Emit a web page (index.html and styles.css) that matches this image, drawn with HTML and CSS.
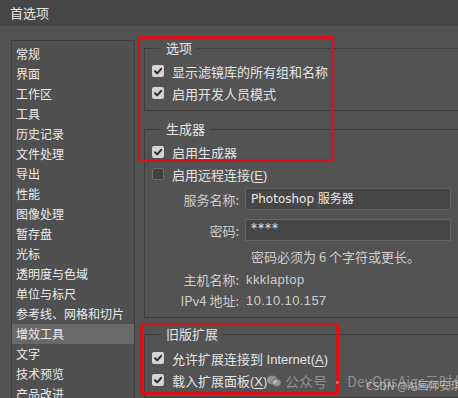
FILE: index.html
```html
<!DOCTYPE html>
<html lang="zh-CN">
<head>
  <meta charset="UTF-8">
  <title>首选项</title>
  <link rel="stylesheet" href="styles.css">
</head>
<body>
  <div class="dialog">
    <div class="titlebar">首选项</div>

    <div class="main">
      <!-- 左侧分类列表 -->
      <ul class="nav">
        <li>常规</li>
        <li>界面</li>
        <li>工作区</li>
        <li>工具</li>
        <li>历史记录</li>
        <li>文件处理</li>
        <li>导出</li>
        <li>性能</li>
        <li>图像处理</li>
        <li>暂存盘</li>
        <li>光标</li>
        <li>透明度与色域</li>
        <li>单位与标尺</li>
        <li>参考线、网格和切片</li>
        <li class="active">增效工具</li>
        <li>文字</li>
        <li>技术预览</li>
        <li>产品改进</li>
      </ul>

      <div class="panel">
        <!-- 选项 -->
        <fieldset class="group g-options">
          <legend>选项</legend>
          <label class="check"><span class="box on"><svg viewBox="0 0 12 12"><path d="M3 6.2 L5.2 8.4 L9.2 3.8"/></svg></span><span>显示滤镜库的所有组和名称</span></label>
          <label class="check"><span class="box on"><svg viewBox="0 0 12 12"><path d="M3 6.2 L5.2 8.4 L9.2 3.8"/></svg></span><span>启用开发人员模式</span></label>
        </fieldset>

        <!-- 生成器 -->
        <fieldset class="group g-generator">
          <legend>生成器</legend>
          <label class="check"><span class="box on"><svg viewBox="0 0 12 12"><path d="M3 6.2 L5.2 8.4 L9.2 3.8"/></svg></span><span>启用生成器</span></label>
          <label class="check"><span class="box"></span><span>启用远程连接(<u>E</u>)</span></label>

          <div class="field f-service">
            <span class="label">服务名称:</span>
            <span class="input">Photoshop 服务器</span>
          </div>
          <div class="field f-pass">
            <span class="label">密码:</span>
            <span class="input pass">****</span>
          </div>
          <div class="hint">密码必须为 6 个字符或更长。</div>
          <div class="field info f-host">
            <span class="label">主机名称:</span>
            <span class="value">kkklaptop</span>
          </div>
          <div class="field info">
            <span class="label">IPv4 地址:</span>
            <span class="value">10.10.10.157</span>
          </div>
        </fieldset>

        <!-- 旧版扩展 -->
        <fieldset class="group g-legacy">
          <legend>旧版扩展</legend>
          <label class="check"><span class="box on"><svg viewBox="0 0 12 12"><path d="M3 6.2 L5.2 8.4 L9.2 3.8"/></svg></span><span>允许扩展连接到 Internet(<u>A</u>)</span></label>
          <label class="check"><span class="box on"><svg viewBox="0 0 12 12"><path d="M3 6.2 L5.2 8.4 L9.2 3.8"/></svg></span><span>载入扩展面板(<u>X</u>)</span></label>
        </fieldset>
      </div>
    </div>

    <!-- 标注框 -->
    <div class="mark mark-1"></div>
    <div class="mark mark-2"></div>

    <!-- 水印 -->
    <div class="watermark">
      <svg class="wx" viewBox="0 0 16 14">
        <ellipse cx="6" cy="6" rx="5.6" ry="4.8"/>
        <ellipse cx="10.6" cy="8.8" rx="4.6" ry="3.9"/>
      </svg>
      <span>公众号 · DevOpsAigc云时代</span>
    </div>
    <div class="csdn">CSDN @AI画师安琪</div>
  </div>
</body>
</html>
```

FILE: styles.css
```css
body { margin: 0; background: #535353; }
.dialog { position: relative; width: 458px; height: 398px; overflow: hidden; background: #535353; color: #e2e2e2; font-family: "Liberation Sans", "Noto Sans CJK SC", sans-serif; }

.titlebar { height: 26px; line-height: 26px; padding-left: 10px; background: #464646; color: #e6e6e6; font-size: 13px; font-family: "Noto Sans CJK SC", sans-serif; }

.main { display: flex; gap: 9px; padding-left: 11px; }

.nav { list-style: none; margin: 14px 0 0; padding: 3px 0 0; width: 122px; flex: none; height: 400px; border: 1px solid #3f3f3f; border-bottom: none; background: #505050; font-family: "Noto Sans CJK SC", sans-serif; font-size: 12px; }
.nav li { height: 20px; line-height: 20px; padding-left: 4px; color: #ececec; white-space: nowrap; }
.nav li.active { background: #696969; }

.panel { flex: 1; min-width: 0; margin-right: -30px; }

.group { margin: 0; min-width: 0; padding: 3px 0 6px 7px; border: 1px solid #3d3d3d; border-right: none; font-size: 13px; }
.group legend { margin-left: 9px; padding: 0 5px; height: 18px; line-height: 18px; font-family: "Noto Sans CJK SC", sans-serif; color: #e6e6e6; }
.g-options { margin-top: 13px; }
.g-generator { margin-top: 9px; }
.g-legacy { margin-top: 7px; padding-top: 4px; }

.check { display: flex; align-items: center; gap: 8px; height: 22px; white-space: nowrap; color: #e4e4e4; }
.check u { text-decoration-thickness: 1px; text-underline-offset: 2px; }
.box { width: 10px; height: 10px; flex: none; border: 1px solid #6c6c6c; border-radius: 2px; background: #414141; }
.box.on { width: 12px; height: 12px; border: none; background: #d4d4d4; }
.box svg { display: block; width: 12px; height: 12px; }
.box path { fill: none; stroke: #2e2e2e; stroke-width: 2; stroke-linecap: round; stroke-linejoin: round; }

.field { display: flex; align-items: center; gap: 6px; height: 22px; }
.field .label { width: 87px; flex: none; text-align: right; color: #cdcdcd; font-family: "Noto Sans CJK SC", sans-serif; white-space: nowrap; }
.f-service { margin-top: 3px; }
.f-pass { margin-top: 9px; }
.input { width: 199px; height: 20px; line-height: 20px; padding-left: 5px; border: 1px solid #626262; background: #464646; color: #e8e8e8; white-space: nowrap; font-family: "DejaVu Sans", "Noto Sans CJK SC", sans-serif; font-size: 12px; }
.input.pass { line-height: 16px; letter-spacing: 1px; }
.hint { margin: 7px 0 0 99px; height: 18px; line-height: 18px; color: #cfcfcf; font-family: "Noto Sans CJK SC", sans-serif; }
.f-host { margin-top: 3px; }
.field.info { height: 21px; }
.field .value { color: #cfcfcf; padding-left: 1px; letter-spacing: 0.4px; }

.mark { position: absolute; border: 3px solid #d8141a; border-radius: 3px; }
.mark-1 { left: 137px; top: 36px; width: 191px; height: 120px; }
.mark-2 { left: 140px; top: 323px; width: 193px; height: 66px; }

.watermark { position: absolute; left: 266px; top: 371px; display: flex; align-items: center; gap: 3px; color: rgba(235, 235, 235, 0.42); font-family: "Noto Sans CJK SC", sans-serif; font-size: 14px; white-space: nowrap; }
.wx { width: 16px; height: 14px; }
.wx ellipse { fill: rgba(235, 235, 235, 0.42); stroke: #535353; stroke-width: 0.8; }
.csdn { position: absolute; left: 366px; top: 377px; color: rgba(240, 240, 240, 0.6); font-family: "Noto Sans CJK SC", sans-serif; font-size: 11px; white-space: nowrap; }
```
